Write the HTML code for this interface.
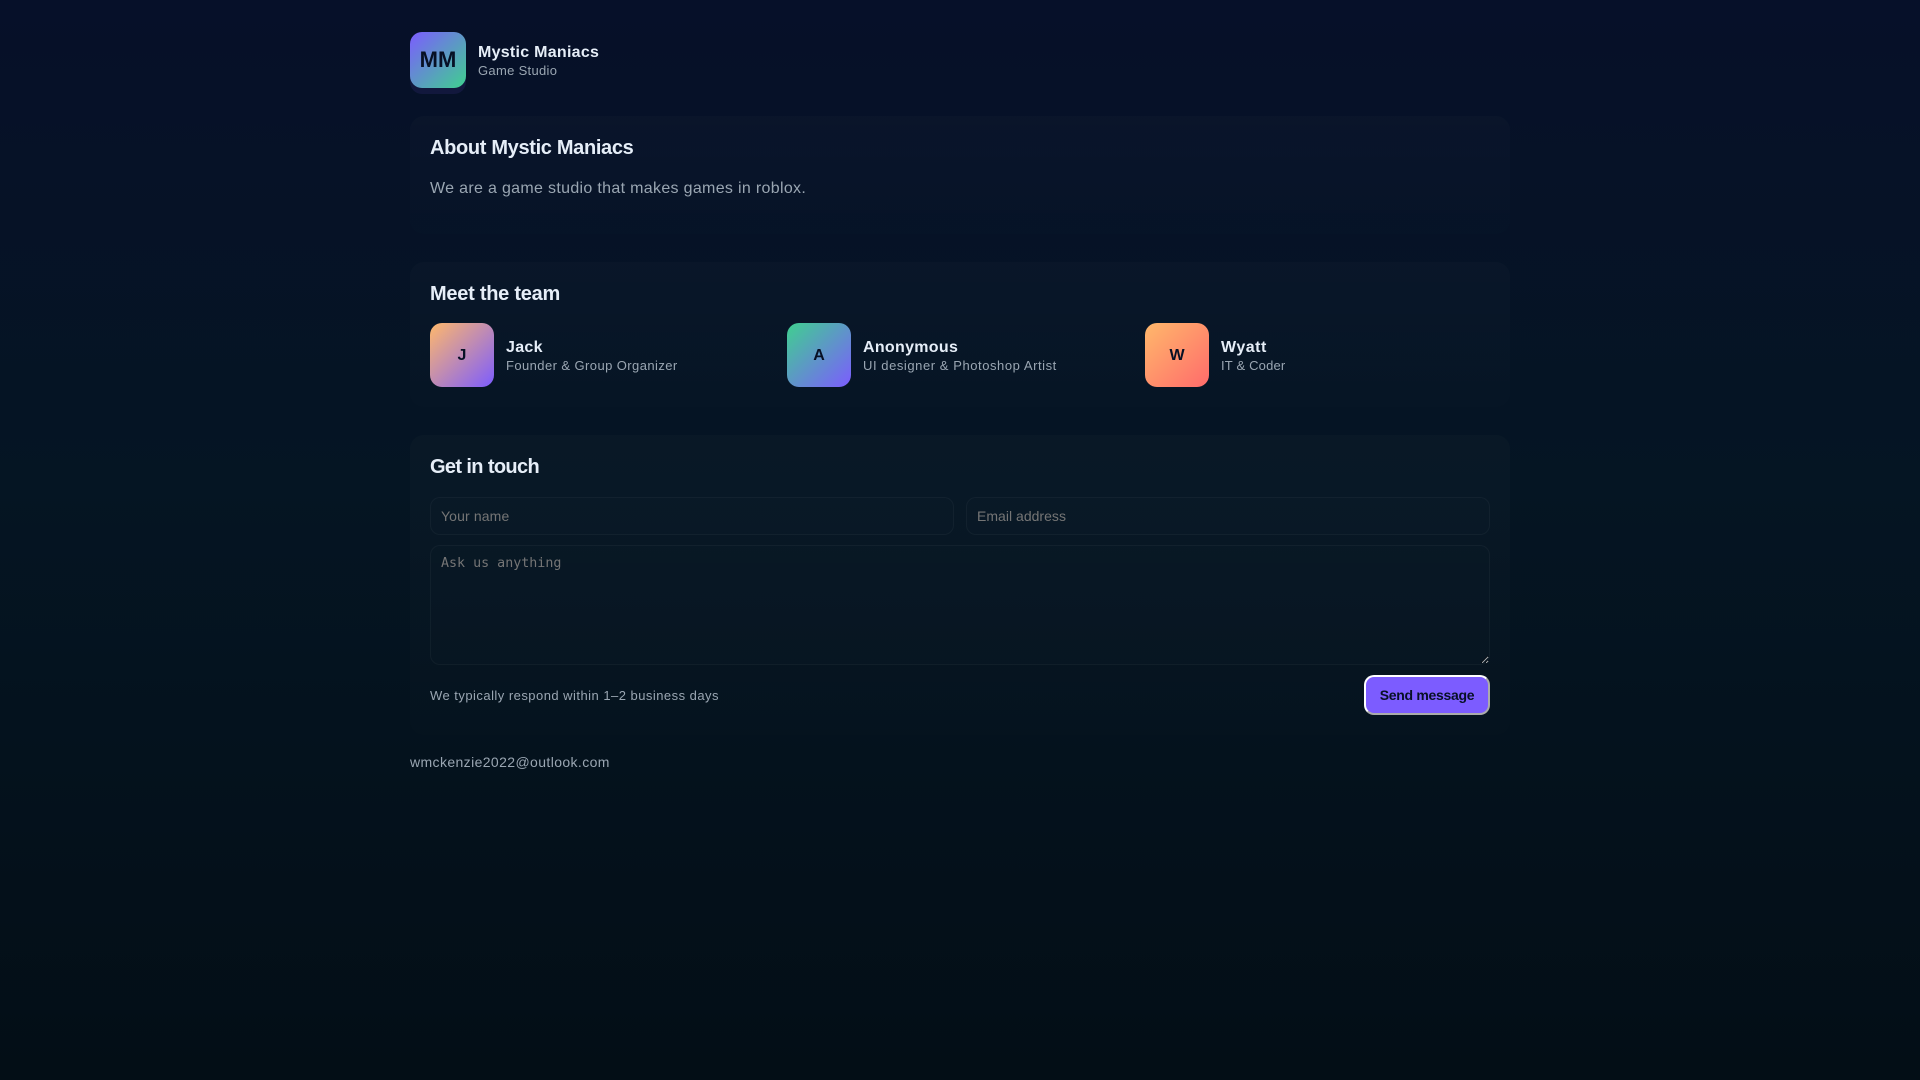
<!DOCTYPE html>
<html lang="en"><head><meta charset="utf-8"><title>Mystic Maniacs</title>
<style>
*{box-sizing:border-box}
html,body{margin:0;padding:0;width:1920px;height:1080px;overflow:hidden}
body{background:linear-gradient(180deg,#061029 0%,#051523 45%,#030e16 100%);font-family:"Liberation Sans",sans-serif;color:#e6eef8;position:relative}
.a{position:absolute;white-space:nowrap;line-height:20px}
.logo{position:absolute;left:410px;top:32px;width:56px;height:56px;border-radius:12px;background:linear-gradient(135deg,#7c5cff,#3fd08f);box-shadow:0 6px 0 rgba(124,92,255,.1);display:flex;align-items:center;justify-content:center;font-weight:700;font-size:22px;color:#071025}
.card{position:absolute;left:410px;width:1100px;border-radius:14px;background:linear-gradient(180deg,rgba(255,255,255,.016),rgba(255,255,255,.004))}
h2{margin:0;font-size:20px;font-weight:700}
.av{position:absolute;top:323px;width:64px;height:64px;border-radius:12px;display:flex;align-items:center;justify-content:center;font-weight:700;font-size:16px;color:#071025;padding-top:1px}
.n{font-size:16px;font-weight:700;letter-spacing:.3px}
.r{font-size:13px;color:#9aa6b2;letter-spacing:.42px}
input,textarea{position:absolute;margin:0;background:rgba(255,255,255,.006);border:1px solid rgba(255,255,255,.04);border-radius:10px;padding:0 10px;outline:0;color:#e6eef8}
input{height:38px;font:14px "Liberation Sans",sans-serif}
textarea{left:430px;top:545px;width:1060px;height:120px;padding:10px;font:13.333px "DejaVu Sans Mono",monospace}
button{position:absolute;left:1364px;top:675px;width:126px;height:40px;border-radius:10px;border:2px outset #fff;background:#7c5cff;color:#071025;font:700 14px "Liberation Sans",sans-serif;padding:0;letter-spacing:-.3px}
</style></head><body>
<div class="logo">MM</div>
<div class="a" style="left:478px;top:43px;font-size:16px;font-weight:700;letter-spacing:.27px">Mystic Maniacs</div>
<div class="a" style="left:478px;top:61px;font-size:13px;color:#9aa6b2;letter-spacing:.31px">Game Studio</div>

<div class="card" style="top:116px;height:118px"></div>
<h2 class="a" style="left:430px;top:138px;letter-spacing:-.33px">About Mystic Maniacs</h2>
<div class="a" style="left:430px;top:179px;font-size:16px;color:#9aa6b2;letter-spacing:.32px">We are a game studio that makes games in roblox.</div>

<div class="card" style="top:262px;height:145px"></div>
<h2 class="a" style="left:430px;top:284px;letter-spacing:-.26px">Meet the team</h2>
<div class="av" style="left:430px;background:linear-gradient(135deg,#ffb86b,#7c5cff)">J</div>
<div class="a n" style="left:506px;top:338px">Jack</div>
<div class="a r" style="left:506px;top:356px">Founder &amp; Group Organizer</div>
<div class="av" style="left:787px;background:linear-gradient(135deg,#3fd08f,#7c5cff)">A</div>
<div class="a n" style="left:863px;top:338px">Anonymous</div>
<div class="a r" style="left:863px;top:356px;letter-spacing:.56px">UI designer &amp; Photoshop Artist</div>
<div class="av" style="left:1145px;background:linear-gradient(135deg,#ffb86b,#ff6b6b)">W</div>
<div class="a n" style="left:1221px;top:338px;letter-spacing:.5px">Wyatt</div>
<div class="a r" style="left:1221px;top:356px;letter-spacing:.18px">IT &amp; Coder</div>

<div class="card" style="top:435px;height:300px"></div>
<h2 class="a" style="left:430px;top:457px;letter-spacing:-.63px">Get in touch</h2>
<input style="left:430px;top:497px;width:524px;letter-spacing:.13px" placeholder="Your name">
<input style="left:966px;top:497px;width:524px;letter-spacing:.02px" placeholder="Email address">
<textarea placeholder="Ask us anything"></textarea>
<div class="a" style="left:430px;top:686px;font-size:13px;color:#9aa6b2;letter-spacing:.47px">We typically respond within 1–2 business days</div>
<button>Send message</button>
<div class="a" style="left:410px;top:752px;font-size:14px;color:#9aa6b2;letter-spacing:.39px">wmckenzie2022@outlook.com</div>
</body></html>
